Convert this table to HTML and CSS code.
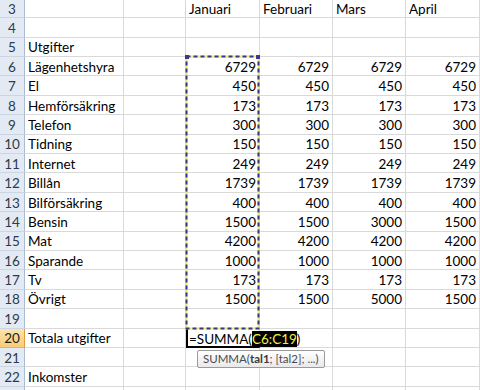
FILE: index.html
```html
<!DOCTYPE html>
<html lang="sv">
<head>
<meta charset="utf-8">
<title>Budget</title>
<link rel="stylesheet" href="styles.css">
</head>
<body>
<div class="sheet">
  <div class="rh first">3</div><div class="c first"></div><div class="c first"></div><div class="c first">Januari</div><div class="c first">Februari</div><div class="c first">Mars</div><div class="c first">April</div>
  <div class="rh">4</div><div class="c"></div><div class="c"></div><div class="c"></div><div class="c"></div><div class="c"></div><div class="c"></div>
  <div class="rh">5</div><div class="c">Utgifter</div><div class="c"></div><div class="c"></div><div class="c"></div><div class="c"></div><div class="c"></div>
  <div class="rh">6</div><div class="c">Lägenhetshyra</div><div class="c"></div><div class="c n">6729</div><div class="c n">6729</div><div class="c n">6729</div><div class="c n">6729</div>
  <div class="rh">7</div><div class="c">El</div><div class="c"></div><div class="c n">450</div><div class="c n">450</div><div class="c n">450</div><div class="c n">450</div>
  <div class="rh">8</div><div class="c">Hemförsäkring</div><div class="c"></div><div class="c n">173</div><div class="c n">173</div><div class="c n">173</div><div class="c n">173</div>
  <div class="rh">9</div><div class="c">Telefon</div><div class="c"></div><div class="c n">300</div><div class="c n">300</div><div class="c n">300</div><div class="c n">300</div>
  <div class="rh">10</div><div class="c">Tidning</div><div class="c"></div><div class="c n">150</div><div class="c n">150</div><div class="c n">150</div><div class="c n">150</div>
  <div class="rh">11</div><div class="c">Internet</div><div class="c"></div><div class="c n">249</div><div class="c n">249</div><div class="c n">249</div><div class="c n">249</div>
  <div class="rh">12</div><div class="c">Billån</div><div class="c"></div><div class="c n">1739</div><div class="c n">1739</div><div class="c n">1739</div><div class="c n">1739</div>
  <div class="rh">13</div><div class="c">Bilförsäkring</div><div class="c"></div><div class="c n">400</div><div class="c n">400</div><div class="c n">400</div><div class="c n">400</div>
  <div class="rh">14</div><div class="c">Bensin</div><div class="c"></div><div class="c n">1500</div><div class="c n">1500</div><div class="c n">3000</div><div class="c n">1500</div>
  <div class="rh">15</div><div class="c">Mat</div><div class="c"></div><div class="c n">4200</div><div class="c n">4200</div><div class="c n">4200</div><div class="c n">4200</div>
  <div class="rh">16</div><div class="c">Sparande</div><div class="c"></div><div class="c n">1000</div><div class="c n">1000</div><div class="c n">1000</div><div class="c n">1000</div>
  <div class="rh">17</div><div class="c">Tv</div><div class="c"></div><div class="c n">173</div><div class="c n">173</div><div class="c n">173</div><div class="c n">173</div>
  <div class="rh">18</div><div class="c">Övrigt</div><div class="c"></div><div class="c n">1500</div><div class="c n">1500</div><div class="c n">5000</div><div class="c n">1500</div>
  <div class="rh">19</div><div class="c"></div><div class="c"></div><div class="c"></div><div class="c"></div><div class="c"></div><div class="c"></div>
  <div class="rh active">20</div><div class="c">Totala utgifter</div><div class="c"></div><div class="c editcell"><div class="edit">=SUMMA(<span class="ref">C6:C19</span>)</div><div class="tip">SUMMA(<b>tal1</b>; [tal2]; ...)</div></div><div class="c"></div><div class="c"></div><div class="c"></div>
  <div class="rh">21</div><div class="c"></div><div class="c"></div><div class="c"></div><div class="c"></div><div class="c"></div><div class="c"></div>
  <div class="rh">22</div><div class="c">Inkomster</div><div class="c"></div><div class="c"></div><div class="c"></div><div class="c"></div><div class="c"></div>
  <div class="rh"></div><div class="c"></div><div class="c"></div><div class="c"></div><div class="c"></div><div class="c"></div><div class="c"></div>

  <svg class="ants" width="78" height="278" viewBox="0 0 78 278">
    <rect x="1.5" y="1.5" width="72" height="272" fill="none" stroke="#ecea7a" stroke-width="2"/>
    <rect x="1.5" y="1.5" width="72" height="272" fill="none" stroke="#38387f" stroke-width="2" stroke-dasharray="4 3"/>
    <rect x="0" y="0" width="4" height="4" fill="#3b3b8c"/>
    <rect x="71" y="0" width="4" height="4" fill="#3b3b8c"/>
  </svg>
</div>
</body>
</html>
```

FILE: styles.css
```css
html, body {
  margin: 0;
  padding: 0;
  background: #ffffff;
  overflow: hidden;
}

.sheet {
  position: relative;
  display: grid;
  grid-template-columns: 25px 99px 62px 74px 73px 73px 74px;
  grid-template-rows: 18.3px;
  grid-auto-rows: 19.4px;
  width: 480px;
  font-family: Lato, "Liberation Sans", sans-serif;
  font-size: 13.5px;
  color: #000000;
}

.rh {
  box-sizing: border-box;
  background: #e4eaf3;
  border-right: 1px solid #a9bcd2;
  border-bottom: 1px solid #cbd6e4;
  color: #2c3a4c;
  display: flex;
  align-items: center;
  justify-content: center;
  padding-top: 1px;
}

.rh.active {
  background: linear-gradient(#fbe4ad, #f7cd78);
  border-right: 1px solid #e39a3a;
  border-bottom: 1px solid #e9b35c;
  color: #1c1c1c;
}

.c {
  box-sizing: border-box;
  border-right: 1px solid #d9d9d9;
  border-bottom: 1px solid #d9d9d9;
  display: flex;
  align-items: center;
  padding: 1px 3px 0 3px;
  white-space: nowrap;
  overflow: visible;
}

.c.n {
  justify-content: flex-end;
}

.editcell {
  position: relative;
  border-left: 2px solid #000000;
  border-bottom: 2px solid #000000;
  padding-left: 1px;
}

.edit {
  position: absolute;
  left: 0;
  top: 2px;
  bottom: 0;
  padding: 1px 2px 0 1px;
  background: #ffffff;
  display: flex;
  align-items: center;
  z-index: 2;
}

.ref {
  background: #000000;
  color: #f2ee4a;
}

.tip {
  position: absolute;
  left: 9px;
  top: 21px;
  height: 18px;
  box-sizing: border-box;
  padding: 0 5px;
  border: 1px solid #9a9a9a;
  border-radius: 2px;
  background: linear-gradient(#ffffff, #e9e9ec);
  color: #4b4b4b;
  font-size: 11.5px;
  display: flex;
  align-items: center;
  z-index: 3;
}

.tip b {
  color: #3a3a3a;
}

.ants {
  position: absolute;
  left: 185px;
  top: 55px;
  z-index: 1;
}
```
